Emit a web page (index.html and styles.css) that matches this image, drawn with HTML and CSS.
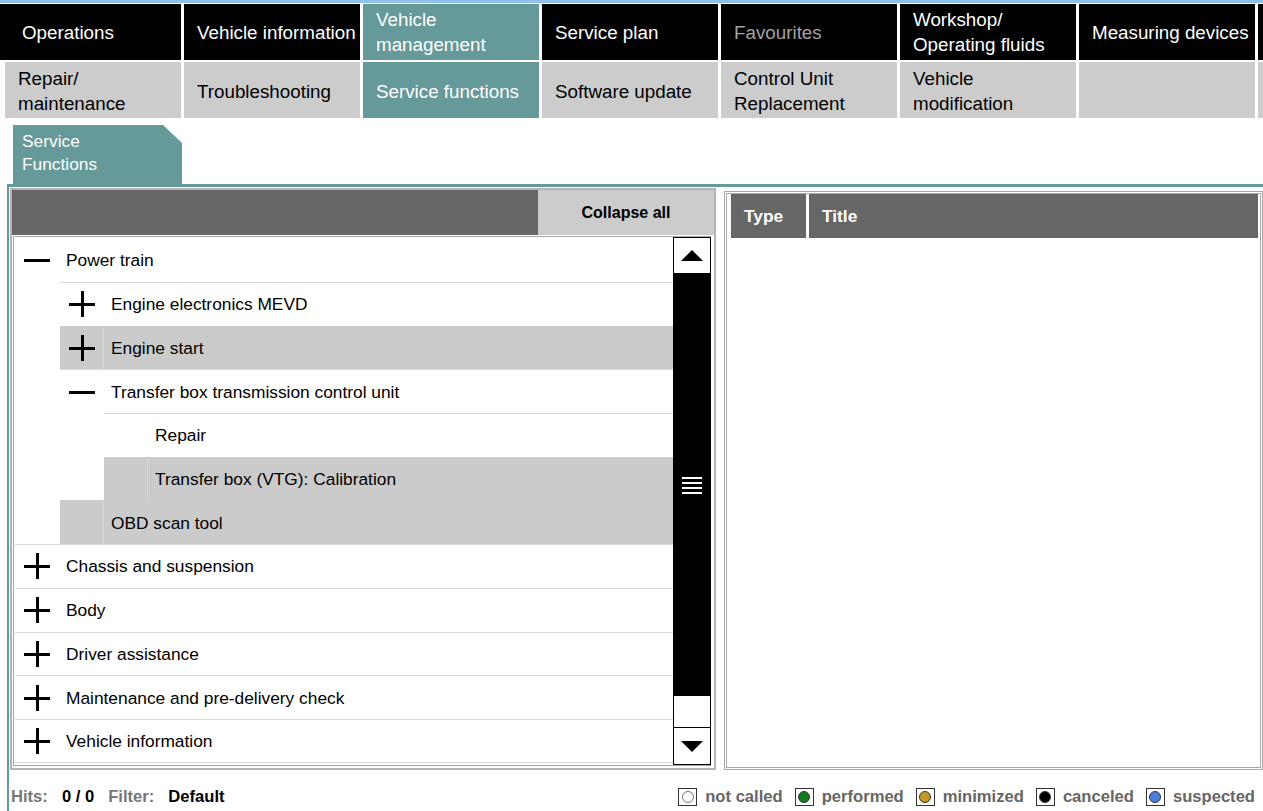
FILE: index.html
```html
<!DOCTYPE html>
<html>
<head>
<meta charset="utf-8">
<title>Service Functions</title>
<link rel="stylesheet" href="styles.css">
</head>
<body>
<div class="topline"></div>
<nav class="nav nav-main">
  <div class="cell dark first">Operations</div>
  <div class="cell dark">Vehicle information</div>
  <div class="cell active">Vehicle<br>management</div>
  <div class="cell dark">Service plan</div>
  <div class="cell dark muted">Favourites</div>
  <div class="cell dark">Workshop/<br>Operating fluids</div>
  <div class="cell dark">Measuring devices</div>
  <div class="cell dark"></div>
</nav>
<nav class="nav nav-sub">
  <div class="cell light">Repair/<br>maintenance</div>
  <div class="cell light">Troubleshooting</div>
  <div class="cell active">Service functions</div>
  <div class="cell light">Software update</div>
  <div class="cell light">Control Unit<br>Replacement</div>
  <div class="cell light">Vehicle<br>modification</div>
  <div class="cell light"></div>
  <div class="cell light"></div>
</nav>
<div class="tabrow">
  <div class="tab">Service<br>Functions</div>
</div>
<main class="panel">
  <div class="workarea">
    <section class="tree-panel">
      <div class="tree-head">
        <div class="tree-head-fill"></div>
        <button class="collapse">Collapse all</button>
      </div>
      <div class="tree-box">
        <div class="rows">
          <div class="row lvl0 first-row"><span class="ico"><svg width="26" height="26" viewBox="0 0 26 26"><path d="M0 13.5H26" stroke="#000" stroke-width="3"/></svg></span><span class="lbl">Power train</span></div>
          <div class="row lvl1"><span class="ico"><svg width="26" height="26" viewBox="0 0 26 26"><path d="M0 13.5H26M13.5 0V26" stroke="#000" stroke-width="3"/></svg></span><span class="lbl">Engine electronics MEVD</span></div>
          <div class="row lvl1 sel"><span class="ico"><svg width="26" height="26" viewBox="0 0 26 26"><path d="M0 13.5H26M13.5 0V26" stroke="#000" stroke-width="3"/></svg></span><span class="lbl">Engine start</span></div>
          <div class="row lvl1"><span class="ico"><svg width="26" height="26" viewBox="0 0 26 26"><path d="M0 13.5H26" stroke="#000" stroke-width="3"/></svg></span><span class="lbl">Transfer box transmission control unit</span></div>
          <div class="row lvl2"><span class="ico"></span><span class="lbl">Repair</span></div>
          <div class="row lvl2 sel"><span class="ico"></span><span class="lbl">Transfer box (VTG): Calibration</span></div>
          <div class="row lvl1 sel"><span class="ico"></span><span class="lbl">OBD scan tool</span></div>
          <div class="row lvl0"><span class="ico"><svg width="26" height="26" viewBox="0 0 26 26"><path d="M0 13.5H26M13.5 0V26" stroke="#000" stroke-width="3"/></svg></span><span class="lbl">Chassis and suspension</span></div>
          <div class="row lvl0"><span class="ico"><svg width="26" height="26" viewBox="0 0 26 26"><path d="M0 13.5H26M13.5 0V26" stroke="#000" stroke-width="3"/></svg></span><span class="lbl">Body</span></div>
          <div class="row lvl0"><span class="ico"><svg width="26" height="26" viewBox="0 0 26 26"><path d="M0 13.5H26M13.5 0V26" stroke="#000" stroke-width="3"/></svg></span><span class="lbl">Driver assistance</span></div>
          <div class="row lvl0"><span class="ico"><svg width="26" height="26" viewBox="0 0 26 26"><path d="M0 13.5H26M13.5 0V26" stroke="#000" stroke-width="3"/></svg></span><span class="lbl">Maintenance and pre-delivery check</span></div>
          <div class="row lvl0 last-row"><span class="ico"><svg width="26" height="26" viewBox="0 0 26 26"><path d="M0 13.5H26M13.5 0V26" stroke="#000" stroke-width="3"/></svg></span><span class="lbl">Vehicle information</span></div>
        </div>
        <div class="scrollbar">
          <div class="sb-btn sb-up"><svg width="22" height="11" viewBox="0 0 22 11"><path d="M0 11L11 0L22 11Z" fill="#000"/></svg></div>
          <div class="sb-thumb">
            <span class="grip"></span><span class="grip"></span><span class="grip"></span><span class="grip"></span>
          </div>
          <div class="sb-track"></div>
          <div class="sb-btn sb-down"><svg width="22" height="11" viewBox="0 0 22 11"><path d="M0 0L22 0L11 11Z" fill="#000"/></svg></div>
        </div>
      </div>
    </section>
    <section class="result-panel">
      <div class="result-head">
        <div class="col-type">Type</div>
        <div class="col-title">Title</div>
      </div>
    </section>
  </div>
  <footer class="footer">
    <div class="hits">
      <span class="key">Hits:</span><span class="val">0 / 0</span><span class="key">Filter:</span><span class="val">Default</span>
    </div>
    <div class="legend">
      <span class="item"><span class="box"><span class="dot dot-none"></span></span>not called</span>
      <span class="item"><span class="box"><span class="dot dot-done"></span></span>performed</span>
      <span class="item"><span class="box"><span class="dot dot-min"></span></span>minimized</span>
      <span class="item"><span class="box"><span class="dot dot-cancel"></span></span>canceled</span>
      <span class="item"><span class="box"><span class="dot dot-susp"></span></span>suspected</span>
    </div>
  </footer>
</main>
</body>
</html>
```
FILE: styles.css
```css
* { box-sizing: border-box; }
html, body { margin: 0; padding: 0; }
body {
  width: 1263px;
  height: 811px;
  overflow: hidden;
  background: #fff;
  font-family: "Liberation Sans", Arial, sans-serif;
  color: #000;
}
.topline {
  height: 3px;
  background: #8fc0ea;
  margin-bottom: 1px;
}
.nav {
  display: grid;
  column-gap: 3px;
  height: 56px;
}
.nav-main {
  grid-template-columns: 181px repeat(6, 176px) 1fr;
}
.nav-sub {
  margin-top: 2px;
  padding-left: 5px;
  grid-template-columns: repeat(7, 176px) 1fr;
}
.cell {
  display: flex;
  align-items: center;
  padding: 0 0 0 13px;
  font-size: 18.8px;
  line-height: 25px;
  white-space: nowrap;
  overflow: hidden;
}
.nav-sub .cell { padding-top: 2px; }
.cell.first { padding-left: 22px; }
.dark { background: #000; color: #fff; }
.dark.muted { color: #a3a3a3; }
.light { background: #cccccc; color: #000; }
.active { background: #669999; color: #fff; }

.tabrow {
  height: 66px;
  padding: 7px 0 0 13px;
}
.tab {
  width: 169px;
  height: 59px;
  background: #669999;
  color: #fff;
  font-size: 17.33px;
  line-height: 23px;
  padding: 5px 9px;
  clip-path: polygon(0 0, 150px 0, 169px 18px, 169px 100%, 0 100%);
}

.panel {
  margin-left: 7px;
  border-left: 2px solid #669999;
  border-top: 3px solid #669999;
  height: 627px;
}
.workarea {
  display: flex;
  padding: 1px 0 0 1px;
  height: 583px;
}
.tree-panel {
  width: 706px;
  height: 582px;
  border: 2px solid #b4b4b4;
}
.tree-head {
  display: flex;
  height: 45px;
  background: #666;
}
.tree-head-fill { flex: 1; }
.collapse {
  width: 176px;
  height: 45px;
  border: 0;
  margin: 0;
  padding: 0;
  background: #cccccc;
  font-family: "Liberation Sans", Arial, sans-serif;
  font-weight: bold;
  font-size: 16px;
  color: #000;
}
.tree-box {
  display: flex;
  margin: 1px 3px 0 1px;
  height: 530px;
  border: 1px solid #a8a8a8;
  border-right: 0;
}
.rows {
  flex: 1;
  background: #fff;
}
.row {
  display: flex;
  align-items: stretch;
  height: 43.7px;
  border-top: 1px solid #d9d9d9;
  font-size: 17.33px;
}
.row.first-row { border-top: 0; height: 45px; }
.row.last-row { border-bottom: 1px solid #d9d9d9; }
.row.lvl0 { margin-left: 1px; }
.row.lvl1 { margin-left: 46px; }
.row.lvl2 { margin-left: 90px; }
.row.sel { background: #cbcbcb; border-top-color: #cbcbcb; }
.row.sel .ico { border-right: 1px solid #dadada; }
.ico {
  width: 44px;
  flex: none;
  display: flex;
  align-items: center;
  justify-content: center;
}
.lbl {
  display: flex;
  align-items: center;
  padding-left: 7px;
  padding-top: 1px;
}
.scrollbar {
  width: 38px;
  border: 1px solid #000;
  display: flex;
  flex-direction: column;
  background: #fff;
}
.sb-btn {
  display: flex;
  align-items: center;
  justify-content: center;
  height: 36px;
  flex: none;
}
.sb-up { border-bottom: 1px solid #000; }
.sb-down { border-top: 1px solid #000; height: 37px; }
.sb-thumb {
  height: 422px;
  flex: none;
  background: #000;
  display: flex;
  flex-direction: column;
  align-items: center;
  justify-content: center;
  gap: 3px;
}
.grip {
  display: block;
  width: 20px;
  height: 2px;
  background: #fff;
}
.sb-track { flex: 1; }

.result-panel {
  margin: 3px 0 0 8px;
  width: 539px;
  height: 579px;
  border: 3px double #a9a9a9;
  padding: 0 2px 0 4px;
}
.result-head {
  display: flex;
  height: 44px;
  color: #fff;
  font-weight: bold;
  font-size: 17.33px;
}
.col-type {
  width: 75px;
  margin-right: 3px;
  background: #666;
  padding: 1px 0 0 13px;
  display: flex;
  align-items: center;
}
.col-title {
  flex: 1;
  background: #666;
  padding: 1px 0 0 13px;
  display: flex;
  align-items: center;
}

.footer {
  display: flex;
  justify-content: space-between;
  align-items: center;
  padding: 14px 8px 0 2px;
  height: 40px;
  font-weight: bold;
  font-size: 16.6px;
  line-height: 20px;
}
.hits .key { color: #777; margin-right: 14px; }
.hits .val { color: #000; margin-right: 14px; }
.legend { display: flex; align-items: center; color: #666; }
.item { display: flex; align-items: center; margin-left: 12px; }
.item:first-child { margin-left: 0; }
.box {
  width: 19px;
  height: 18px;
  border: 1px solid #333;
  background: #fff;
  display: flex;
  align-items: center;
  justify-content: center;
  margin-right: 8px;
}
.dot {
  width: 12px;
  height: 12px;
  border-radius: 50%;
  border: 1px solid #333;
}
.dot-none { background: #fff; border-color: #777; }
.dot-done { background: #0f7d1f; }
.dot-min { background: #c49a24; }
.dot-cancel { background: #000; }
.dot-susp { background: #4a7ddc; }
```
